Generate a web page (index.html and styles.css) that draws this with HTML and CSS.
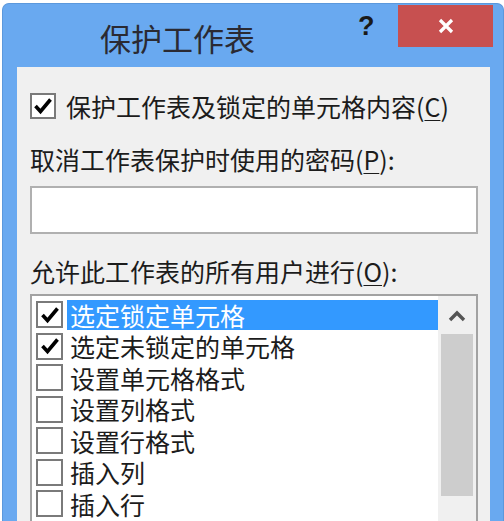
FILE: index.html
```html
<!DOCTYPE html>
<html>
<head>
<meta name="viewport" content="width=device-width, initial-scale=1">
<link rel="stylesheet" href="styles.css">
</head>
<body>

<div class="window">
  <div class="titlebar">
    <div class="title">保护工作表</div>
    <div class="help">?</div>
    <div class="close">
      <svg width="18" height="18" viewBox="0 0 18 18"><path d="M3 3 L15 15 M15 3 L3 15" stroke="#fff" stroke-width="3.2" fill="none"/></svg>
    </div>
  </div>

  <div class="panel">
    <div class="check-row">
      <span class="box checked">
        <svg width="22" height="22" viewBox="0 0 22 22"><path d="M3.5 11 L8.5 16.5 L18.5 4.5" stroke="#000" stroke-width="3.6" fill="none"/></svg>
      </span>
      <span class="label">保护工作表及锁定的单元格内容(<u>C</u>)</span>
    </div>

    <div class="caption pw">取消工作表保护时使用的密码(<u>P</u>):</div>
    <div class="input"></div>

    <div class="caption allow">允许此工作表的所有用户进行(<u>O</u>):</div>

    <div class="listbox">
      <div class="items">
        <div class="item selected"><span class="box checked"><svg width="22" height="22" viewBox="0 0 22 22"><path d="M3.5 11 L8.5 16.5 L18.5 4.5" stroke="#000" stroke-width="3.6" fill="none"/></svg></span><span class="text">选定锁定单元格</span></div>
        <div class="item"><span class="box checked"><svg width="22" height="22" viewBox="0 0 22 22"><path d="M3.5 11 L8.5 16.5 L18.5 4.5" stroke="#000" stroke-width="3.6" fill="none"/></svg></span><span class="text">选定未锁定的单元格</span></div>
        <div class="item"><span class="box"></span><span class="text">设置单元格格式</span></div>
        <div class="item"><span class="box"></span><span class="text">设置列格式</span></div>
        <div class="item"><span class="box"></span><span class="text">设置行格式</span></div>
        <div class="item"><span class="box"></span><span class="text">插入列</span></div>
        <div class="item"><span class="box"></span><span class="text">插入行</span></div>
        <div class="item"><span class="box"></span><span class="text">插入超链接</span></div>
      </div>
      <div class="scrollbar">
        <div class="arrow">
          <svg width="18" height="12" viewBox="0 0 18 12"><path d="M2 10 L9 3 L16 10" stroke="#555" stroke-width="3.4" fill="none"/></svg>
        </div>
        <div class="thumb"></div>
      </div>
    </div>
  </div>
</div>

</body>
</html>
```

FILE: styles.css
```css
* {box-sizing: border-box;}

body {
  margin: 0;
  background: white;
  overflow: hidden;
  font-family: "Noto Sans CJK SC", "Noto Sans", sans-serif;
  color: #1c1c1c;
}

u {
  text-decoration-thickness: 1px;
  text-underline-offset: 3px;
}

/* window frame */
.window {
  margin: 3px 0 0 2px;
  width: 502px;
  height: 600px;
  background: #69a9f0;
  border: 1px solid #5b98dc;
  border-bottom: none;
  border-radius: 7px 7px 0 0;
}

.titlebar {
  display: flex;
  align-items: flex-start;
  height: 63px;
}
.title {
  margin: 16px 0 0 97px;
  font-size: 31px;
  line-height: 36px;
  color: #2a2a33;
}
.help {
  margin: 7px 0 0 103px;
  font-family: "Liberation Sans", Arial, sans-serif;
  font-weight: bold;
  font-size: 27px;
  line-height: 30px;
  color: #1a1a1a;
}
.close {
  margin: 1px 10px 0 auto;
  width: 95px;
  height: 42px;
  background: #c75050;
  display: flex;
  align-items: center;
  justify-content: center;
}

/* dialog body */
.panel {
  margin: 0 13px 0 14px;
  height: 540px;
  background: #f0f0f0;
  padding: 26px 12px 0 13px;
  font-size: 25px;
}

.box {
  flex: none;
  display: flex;
  align-items: center;
  justify-content: center;
  width: 26px;
  height: 26px;
  border: 2px solid #7a7a7a;
  background: white;
}

.check-row {
  display: flex;
  align-items: center;
  gap: 10px;
  height: 26px;
}
.label {
  line-height: 26px;
}

.caption {
  line-height: 30px;
}
.pw {
  margin-top: 25px;
}
.input {
  margin-top: 12px;
  height: 48px;
  background: white;
  border: 2px solid #b0b0b0;
}
.allow {
  margin-top: 22px;
}

/* list with checkboxes */
.listbox {
  margin-top: 8px;
  display: flex;
  height: 300px;
  background: white;
  border: 2px solid #a2a2a2;
  border-bottom: none;
}
.items {
  flex: 1;
  padding: 3px 0 0 4px;
}
.item {
  display: flex;
  align-items: center;
  height: 31.5px;
}
.item .box {
  width: 27px;
  height: 27px;
}
.item .text {
  margin-left: 4px;
  padding-left: 3px;
  height: 30px;
  line-height: 30px;
  flex: 1;
}
.item.selected .text {
  background: #3399ff;
  color: white;
}

.scrollbar {
  flex: none;
  width: 38px;
  background: #f0f0f0;
  padding-top: 1px;
}
.arrow {
  height: 37px;
  display: flex;
  align-items: center;
  justify-content: center;
}
.thumb {
  margin: 0 3px 0 3px;
  height: 162px;
  background: #cdcdcd;
}
```
